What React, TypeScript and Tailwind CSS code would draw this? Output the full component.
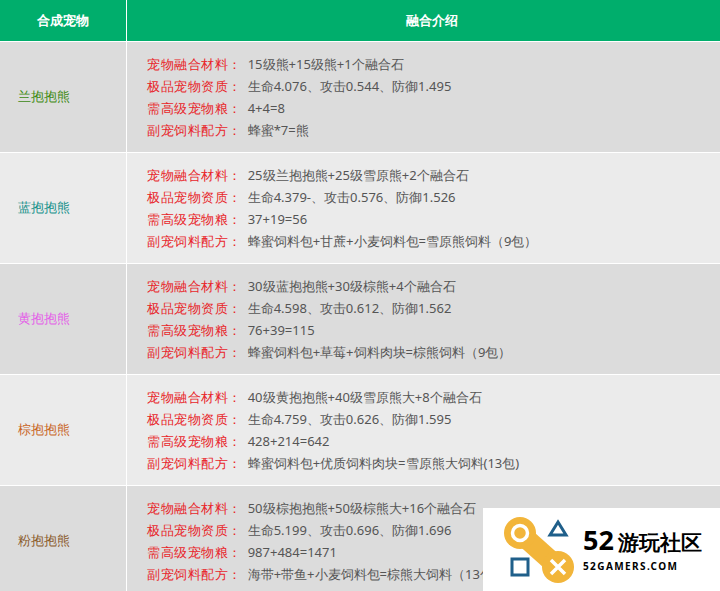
const rows = [
  {
    name: "兰抱抱熊",
    color: "text-[#3d8a12]",
    bg: "bg-[#dcdcdc]",
    lines: ["15级熊+15级熊+1个融合石", "生命4.076、攻击0.544、防御1.495", "4+4=8", "蜂蜜*7=熊"],
  },
  {
    name: "蓝抱抱熊",
    color: "text-[#14908a]",
    bg: "bg-[#ebebeb]",
    lines: ["25级兰抱抱熊+25级雪原熊+2个融合石", "生命4.379-、攻击0.576、防御1.526", "37+19=56", "蜂蜜饲料包+甘蔗+小麦饲料包=雪原熊饲料（9包）"],
  },
  {
    name: "黄抱抱熊",
    color: "text-[#e45ee8]",
    bg: "bg-[#dcdcdc]",
    lines: ["30级蓝抱抱熊+30级棕熊+4个融合石", "生命4.598、攻击0.612、防御1.562", "76+39=115", "蜂蜜饲料包+草莓+饲料肉块=棕熊饲料（9包）"],
  },
  {
    name: "棕抱抱熊",
    color: "text-[#c8641e]",
    bg: "bg-[#ebebeb]",
    lines: ["40级黄抱抱熊+40级雪原熊大+8个融合石", "生命4.759、攻击0.626、防御1.595", "428+214=642", "蜂蜜饲料包+优质饲料肉块=雪原熊大饲料(13包)"],
  },
  {
    name: "粉抱抱熊",
    color: "text-[#8a5a2a]",
    bg: "bg-[#dcdcdc]",
    lines: ["50级棕抱抱熊+50级棕熊大+16个融合石", "生命5.199、攻击0.696、防御1.696", "987+484=1471", "海带+带鱼+小麦饲料包=棕熊大饲料（13包）"],
  },
];

const labels = ["宠物融合材料：", "极品宠物资质：", "需高级宠物粮：", "副宠饲料配方："];

function Logo() {
  return (
    <div className="absolute left-[483px] top-[508px] flex h-[83px] w-[237px] items-center gap-2 bg-white pl-5">
      <svg width="72" height="68" viewBox="0 0 72 68">
        <line x1="17" y1="17" x2="55" y2="51" stroke="#f2b53a" strokeWidth="20" />
        <circle cx="17" cy="17" r="16" fill="#f2b53a" />
        <circle cx="55" cy="51" r="16" fill="#f2b53a" />
        <circle cx="17" cy="17" r="7.5" fill="none" stroke="#fff" strokeWidth="3.5" />
        <path d="M55 6 L63 19 L47 19 Z" fill="none" stroke="#1f5f8a" strokeWidth="3" />
        <rect x="9" y="43" width="16" height="16" fill="none" stroke="#1f5f8a" strokeWidth="3" />
        <path d="M48 44 L62 58 M62 44 L48 58" stroke="#fff" strokeWidth="3.5" />
      </svg>
      <div className="flex flex-col">
        <div className="flex items-end gap-1 text-black">
          <span className="text-[27px] font-bold leading-none [font-family:'Liberation_Sans',sans-serif]">52</span>
          <span className="text-[21px] font-bold leading-none">游玩社区</span>
        </div>
        <span className="mt-[6px] text-[10px] font-bold tracking-[0.14em] text-black [font-family:'Liberation_Sans',sans-serif]">52GAMERS.COM</span>
      </div>
    </div>
  );
}

export default function App() {
  return (
    <div className="relative h-[591px] w-[720px] overflow-hidden bg-white text-[13px] [font-family:'Noto_Sans_CJK_SC','Noto_Sans',sans-serif]">
      <div className="flex h-[41px] bg-[#00ae6c] font-bold text-white">
        <div className="flex w-[127px] items-center justify-center border-r border-white">合成宠物</div>
        <div className="flex flex-1 items-center justify-center pl-4">融合介绍</div>
      </div>
      {rows.map((r) => (
        <div key={r.name} className={`flex h-[111px] border-t border-white ${r.bg}`}>
          <div className={`flex w-[127px] items-center pl-[18px] border-r border-white font-medium ${r.color}`}>{r.name}</div>
          <div className="flex flex-1 flex-col justify-center gap-[3px] pl-[20px] leading-[19px]">
            {r.lines.map((l, i) => (
              <div key={i}>
                <span className="font-medium tracking-[0.04em] text-[#e8262a]">{labels[i]}</span>
                <span className="ml-[6px] text-[#555]">{l}</span>
              </div>
            ))}
          </div>
        </div>
      ))}
      <Logo />
    </div>
  );
}
